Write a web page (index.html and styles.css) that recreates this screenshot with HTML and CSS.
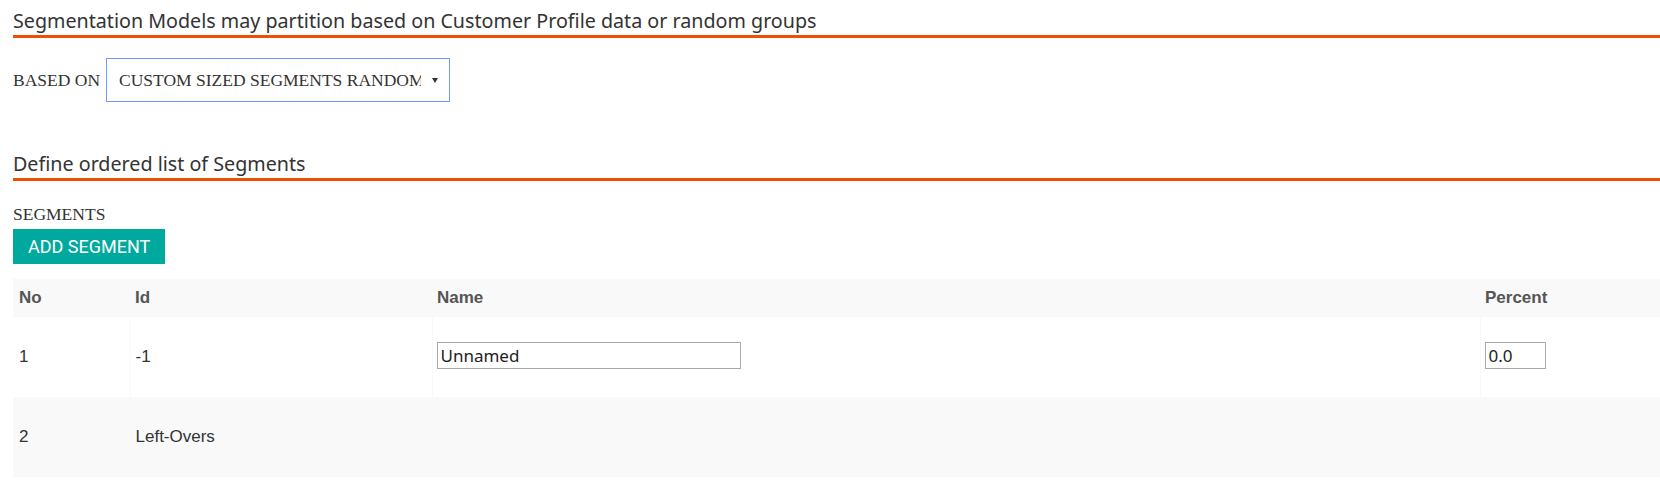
FILE: index.html
```html
<!DOCTYPE html>
<html lang="en">
<head>
    <meta charset="UTF-8">
    <meta name="viewport" content="width=device-width, initial-scale=1.0">
    <title>Segmentation Model</title>
    <link rel="stylesheet" href="styles.css">
</head>
<body>
    <main class="page">
        <h2 class="section-title">Segmentation Models may partition based on Customer Profile data or random groups</h2>
        <div class="field-row">
            <label for="based-on" class="field-label">BASED ON</label>
            <div class="select-wrap">
                <select id="based-on" class="based-select">
                    <option>CUSTOM SIZED SEGMENTS RANDOMLY</option>
                    <option>CUSTOMER PROFILE DATA</option>
                </select>
                <span class="select-arrow"></span>
            </div>
        </div>

        <h2 class="section-title second">Define ordered list of Segments</h2>
        <div class="field-label segments-label">SEGMENTS</div>
        <button type="button" class="add-button">ADD SEGMENT</button>

        <table class="segments">
            <colgroup>
                <col class="col-no">
                <col class="col-id">
                <col class="col-name">
                <col class="col-percent">
            </colgroup>
            <thead>
                <tr>
                    <th>No</th>
                    <th>Id</th>
                    <th>Name</th>
                    <th>Percent</th>
                </tr>
            </thead>
            <tbody>
                <tr>
                    <td>1</td>
                    <td>-1</td>
                    <td><input type="text" class="name-input" value="Unnamed"></td>
                    <td><input type="text" class="percent-input" value="0.0"></td>
                </tr>
                <tr>
                    <td>2</td>
                    <td>Left-Overs</td>
                    <td></td>
                    <td></td>
                </tr>
            </tbody>
        </table>
    </main>
</body>
</html>
```

FILE: styles.css
```css
body {
    margin: 0;
    font-family: "Liberation Serif", "Times New Roman", serif;
    color: #333;
    background-color: #fff;
}
.page {
    padding: 9px 0 0 13px;
}
.section-title {
    margin: 0;
    padding-bottom: 2px;
    font-family: "Noto Sans", "Open Sans", sans-serif;
    font-size: 19.7px;
    font-weight: normal;
    line-height: 24px;
    color: #333;
    border-bottom: 3px solid #f04e00;
}
.section-title.second {
    margin-top: 50px;
}
.field-row {
    display: flex;
    align-items: center;
    gap: 6px;
    margin-top: 20px;
}
.field-label {
    font-size: 17.5px;
    line-height: 20px;
    color: #333;
}
.select-wrap {
    position: relative;
}
.based-select {
    appearance: none;
    -webkit-appearance: none;
    display: block;
    width: 344px;
    height: 44px;
    margin: 0;
    padding: 0 28px 0 12px;
    border: 1px solid #6b9ff0;
    border-radius: 0;
    background-color: #fff;
    font-family: "Liberation Serif", "Times New Roman", serif;
    font-size: 17.5px;
    color: #333;
    outline: none;
}
.select-arrow {
    position: absolute;
    top: 20px;
    right: 12px;
    border-left: 3px solid transparent;
    border-right: 3px solid transparent;
    border-top: 5px solid #333;
    pointer-events: none;
}
.segments-label {
    margin-top: 23px;
}
.add-button {
    display: block;
    margin-top: 5px;
    height: 35px;
    padding: 0 15px;
    border: none;
    border-radius: 0;
    background-color: #00a99d;
    color: #fff;
    font-family: Roboto, "Liberation Sans", sans-serif;
    font-size: 18px;
    line-height: 35px;
    cursor: pointer;
}
.segments {
    width: 100%;
    margin-top: 15px;
    border-collapse: collapse;
    table-layout: fixed;
    font-family: "Liberation Sans", Arial, sans-serif;
    font-size: 17px;
    color: #333;
}
.col-no { width: 117px; }
.col-id { width: 302px; }
.col-name { width: 1048px; }
.col-percent { width: 180px; }
.segments th,
.segments td {
    padding: 0 5px;
    text-align: left;
    vertical-align: middle;
}
.segments th:first-child,
.segments td:first-child {
    padding-left: 6px;
}
.segments td + td {
    border-left: 1px solid #f9f9f9;
}
.segments th {
    color: #555;
    font-weight: bold;
}
.segments thead tr {
    height: 38px;
    background-color: #f9f9f9;
}
.segments tbody tr {
    height: 80px;
}
.segments tbody tr:nth-child(even) {
    background-color: #f9f9f9;
}
.name-input,
.percent-input {
    display: block;
    box-sizing: border-box;
    height: 27px;
    margin: -3px 0 0 -1px;
    padding: 0 3px;
    border: 1px solid #a9a9a9;
    border-radius: 0;
    font-family: "Noto Sans", "Open Sans", sans-serif;
    font-size: 17px;
    color: #222;
}
.name-input {
    width: 304px;
}
.percent-input {
    width: 61px;
}
```
